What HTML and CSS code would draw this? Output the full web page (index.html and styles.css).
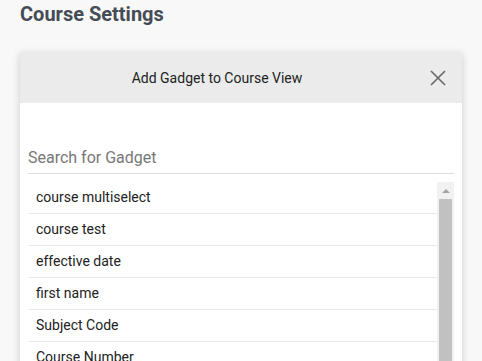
FILE: index.html
```html
<!DOCTYPE html>
<html lang="en">
<head>
    <meta charset="UTF-8">
    <title>Course Settings</title>
    <link rel="stylesheet" href="styles.css">
</head>
<body>
    <div class="page">
        <h1 class="page-title">Course Settings</h1>

        <!-- Add Gadget Dialog -->
        <div class="dialog">
            <div class="dialog-header">
                <div class="dialog-title">Add Gadget to Course View</div>
                <button class="close-button" aria-label="Close">
                    <svg width="16" height="16" viewBox="0 0 16 16">
                        <path d="M1 1 L15 15 M15 1 L1 15" stroke="#6b6b6b" stroke-width="1.7" fill="none"/>
                    </svg>
                </button>
            </div>

            <div class="dialog-body">
                <input class="search-input" type="text" placeholder="Search for Gadget">

                <div class="gadget-list-wrap">
                    <ul class="gadget-list">
                        <li>course multiselect</li>
                        <li>course test</li>
                        <li>effective date</li>
                        <li>first name</li>
                        <li>Subject Code</li>
                        <li>Course Number</li>
                        <li>Course Title</li>
                        <li>Credits</li>
                    </ul>
                    <div class="scrollbar">
                        <div class="scroll-up"><span class="arrow"></span></div>
                        <div class="scroll-thumb"></div>
                    </div>
                </div>
            </div>
        </div>
    </div>
</body>
</html>
```

FILE: styles.css
```css
/* General Styles */
html, body {
    height: 100%;
}

body {
    font-family: Roboto, "Liberation Sans", Arial, sans-serif;
    background-color: #f8f8f8;
    margin: 0;
    padding: 0;
    overflow: hidden;
}

.page {
    padding: 0 20px;
}

.page-title {
    margin: 0;
    padding-top: 2px;
    font-size: 20px;
    line-height: 24px;
    font-weight: 700;
    color: #454c55;
}

/* Dialog */
.dialog {
    margin-top: 26px;
    background-color: #ffffff;
    box-shadow: 0 2px 8px rgba(0, 0, 0, 0.18);
    height: 400px;
}

.dialog-header {
    display: flex;
    align-items: center;
    height: 51px;
    background-color: #ebebeb;
}

.dialog-title {
    flex: 1;
    text-align: center;
    font-size: 14px;
    color: #222222;
    padding-top: 1px;
}

.close-button {
    width: 48px;
    height: 51px;
    border: none;
    background: none;
    padding: 0;
    display: flex;
    align-items: center;
    justify-content: center;
    cursor: pointer;
}

.dialog-body {
    padding: 34px 8px 0 8px;
}

.search-input {
    display: block;
    width: 100%;
    box-sizing: border-box;
    height: 37px;
    border: none;
    border-bottom: 1px solid #dcdcdc;
    padding: 4px 0 0 0;
    font-family: inherit;
    font-size: 16px;
    color: #333333;
    background: transparent;
    outline: none;
}

.search-input::placeholder {
    color: #777777;
}

/* Gadget List */
.gadget-list-wrap {
    display: flex;
    margin-top: 8px;
    height: 200px;
}

.gadget-list {
    flex: 1;
    list-style: none;
    margin: 0;
    padding: 0;
}

.gadget-list li {
    height: 31px;
    line-height: 31px;
    padding-left: 8px;
    font-size: 14px;
    color: #222222;
    border-bottom: 1px solid #e9e9e9;
}

.scrollbar {
    width: 17px;
    background-color: #f1f1f1;
    display: flex;
    flex-direction: column;
    align-items: center;
}

.scroll-up {
    height: 17px;
    width: 17px;
    display: flex;
    align-items: center;
    justify-content: center;
}

.arrow {
    width: 0;
    height: 0;
    border-left: 4px solid transparent;
    border-right: 4px solid transparent;
    border-bottom: 4px solid #a3a3a3;
}

.scroll-thumb {
    flex: 1;
    width: 13px;
    background-color: #c1c1c1;
}
```
